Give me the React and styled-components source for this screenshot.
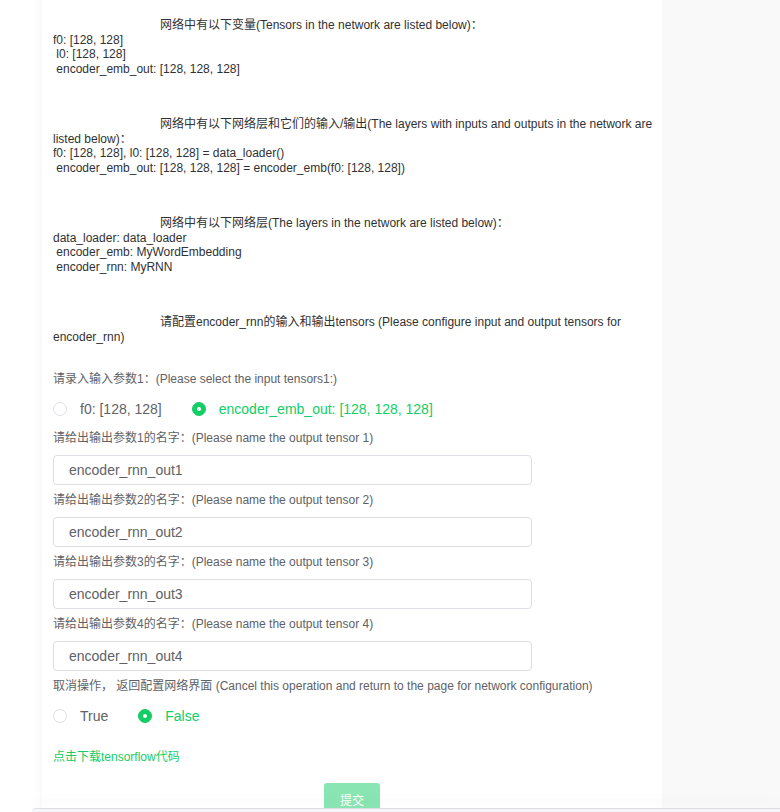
import React from "react";
import styled, { createGlobalStyle } from "styled-components";

const GREEN = "#13ce66";

const Global = createGlobalStyle`
  html, body { margin: 0; padding: 0; background: #ffffff; }
  body { font-family: "Liberation Sans", Arial, "Noto Sans CJK SC", sans-serif; }
  * { box-sizing: border-box; }
`;

const Page = styled.div`
  display: grid;
  grid-template-columns: 42px 620px 1fr;
  min-height: 812px;
  background: #ffffff;
`;

const Gutter = styled.div`
  background: ${(p) => (p.$side === "right" ? "#f9f9f9" : "#ffffff")};
  box-shadow: ${(p) => (p.$side === "left" ? "inset -10px 0 10px -10px rgba(0,0,0,0.05)" : "none")};
`;

const Panel = styled.div`
  background: #ffffff;
  padding: 18px 2px 0 11px;
  font-size: 12px;
  color: #303133;
`;

const InfoBlock = styled.div`
  white-space: pre-wrap;
  line-height: 14.5px;
  margin-bottom: ${(p) => p.$gap || 41}px;
`;

const InfoHead = styled.div`
  text-indent: 107px;
`;

const InfoLine = styled.div`
  text-indent: 0;
`;

const FieldLabel = styled.div`
  line-height: 20px;
  color: #606266;
  font-size: 12px;
  margin-top: ${(p) => p.$top || 0}px;
  margin-bottom: ${(p) => p.$bottom || 0}px;
`;

const RadioGroup = styled.div`
  display: flex;
  align-items: center;
  height: 39px;
  gap: 30px;
`;

const RadioItem = styled.label`
  display: flex;
  align-items: center;
  font-size: 14px;
  color: ${(p) => (p.$checked ? GREEN : "#606266")};
  cursor: pointer;
`;

const RadioDot = styled.span`
  width: 14px;
  height: 14px;
  border-radius: 50%;
  border: ${(p) => (p.$checked ? `1px solid ${GREEN}` : "1px solid #dcdfe6")};
  background: ${(p) => (p.$checked ? GREEN : "#fff")};
  display: inline-flex;
  align-items: center;
  justify-content: center;
  margin-right: 13px;
  &::after {
    content: "";
    width: 4px;
    height: 4px;
    border-radius: 50%;
    background: #fff;
    display: ${(p) => (p.$checked ? "block" : "none")};
  }
`;

const TextInput = styled.input`
  display: block;
  width: 479px;
  height: 30px;
  border: 1px solid #dcdfe6;
  border-radius: 4px;
  padding: 0 15px;
  font-size: 14px;
  font-family: "Liberation Sans", Arial, "Noto Sans CJK SC", sans-serif;
  color: #606266;
  outline: none;
  background: #fff;
`;

const DownloadLink = styled.a`
  display: block;
  margin-top: 14px;
  line-height: 16px;
  font-size: 12px;
  color: ${GREEN};
  text-decoration: none;
`;

const ButtonRow = styled.div`
  display: flex;
  justify-content: center;
  margin-top: 18px;
  padding-right: 9px;
`;

const SubmitButton = styled.button`
  width: 56px;
  height: 32px;
  border: none;
  border-radius: 3px;
  background: #89e6b2;
  color: #fff;
  font-size: 12px;
  font-family: "Liberation Sans", Arial, "Noto Sans CJK SC", sans-serif;
  cursor: not-allowed;
`;

const BottomBar = styled.div`
  position: fixed;
  left: 32px;
  right: 0;
  bottom: 0;
  height: 4px;
  background: #f6f6f8;
  border-top: 1px solid #dcdfe6;
  border-top-left-radius: 4px;
  box-shadow: 0 -8px 12px rgba(0, 0, 0, 0.03);
`;

function Radio({ checked, children }) {
  return (
    <RadioItem $checked={checked}>
      <RadioDot $checked={checked} />
      {children}
    </RadioItem>
  );
}

const outputs = [1, 2, 3, 4];

export default function App() {
  return (
    <>
      <Global />
      <Page>
        <Gutter $side="left" />
        <Panel>
          <InfoBlock>
            <InfoHead>网络中有以下变量(Tensors in the network are listed below)：</InfoHead>
            <InfoLine>f0: [128, 128]</InfoLine>
            <InfoLine> l0: [128, 128]</InfoLine>
            <InfoLine> encoder_emb_out: [128, 128, 128]</InfoLine>
          </InfoBlock>
          <InfoBlock>
            <InfoHead>网络中有以下网络层和它们的输入/输出(The layers with inputs and outputs in the network are listed below)：</InfoHead>
            <InfoLine>f0: [128, 128], l0: [128, 128] = data_loader()</InfoLine>
            <InfoLine> encoder_emb_out: [128, 128, 128] = encoder_emb(f0: [128, 128])</InfoLine>
          </InfoBlock>
          <InfoBlock>
            <InfoHead>网络中有以下网络层(The layers in the network are listed below)：</InfoHead>
            <InfoLine>data_loader: data_loader</InfoLine>
            <InfoLine> encoder_emb: MyWordEmbedding</InfoLine>
            <InfoLine> encoder_rnn: MyRNN</InfoLine>
          </InfoBlock>
          <InfoBlock $gap={25}>
            <InfoHead>请配置encoder_rnn的输入和输出tensors (Please configure input and output tensors for encoder_rnn)</InfoHead>
          </InfoBlock>

          <FieldLabel>请录入输入参数1：(Please select the input tensors1:)</FieldLabel>
          <RadioGroup>
            <Radio>f0: [128, 128]</Radio>
            <Radio checked>encoder_emb_out: [128, 128, 128]</Radio>
          </RadioGroup>

          {outputs.map((n, i) => (
            <React.Fragment key={n}>
              <FieldLabel $top={i === 0 ? 0 : 5} $bottom={7}>
                请给出输出参数{n}的名字：(Please name the output tensor {n})
              </FieldLabel>
              <TextInput defaultValue={`encoder_rnn_out${n}`} />
            </React.Fragment>
          ))}

          <FieldLabel $top={5}>
            取消操作， 返回配置网络界面 (Cancel this operation and return to the page for network configuration)
          </FieldLabel>
          <RadioGroup>
            <Radio>True</Radio>
            <Radio checked>False</Radio>
          </RadioGroup>

          <DownloadLink href="#">点击下载tensorflow代码</DownloadLink>
          <ButtonRow>
            <SubmitButton>提交</SubmitButton>
          </ButtonRow>
        </Panel>
        <Gutter $side="right" />
      </Page>
      <BottomBar />
    </>
  );
}
